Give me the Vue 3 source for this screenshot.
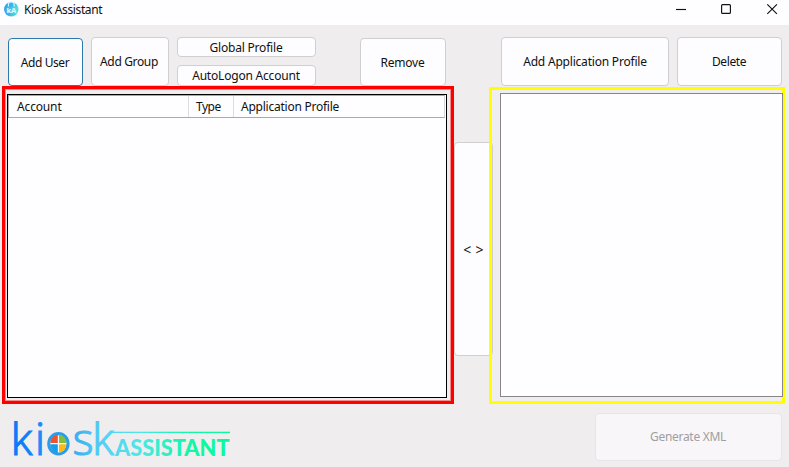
<script setup>
const columns = [
  { name: 'Account', cls: 'account' },
  { name: 'Type', cls: 'type' },
  { name: 'Application Profile', cls: 'profile' },
]
</script>

<template>
  <div class="window">
    <header class="titlebar">
      <svg class="app-icon" width="16" height="18" viewBox="0 0 16 18">
        <defs>
          <linearGradient id="badge" x1="0" y1="0" x2="1" y2="0.3">
            <stop offset="0" stop-color="#2495ea" />
            <stop offset="0.55" stop-color="#35b7ec" />
            <stop offset="1" stop-color="#49e3dc" />
          </linearGradient>
        </defs>
        <circle cx="7.3" cy="9.3" r="7.2" fill="url(#badge)" />
        <path d="M4.4 6.6V4.8a2.9 2.9 0 0 1 5.8 0V6.6" fill="none" stroke="#d5f6fc" stroke-width="1.2" />
        <rect x="1.5" y="6.4" width="11.6" height="7.2" rx="1" fill="#7edcf4" fill-opacity="0.25" />
        <text x="7.3" y="13" class="badge-text" text-anchor="middle">kA</text>
      </svg>
      <span class="title">Kiosk Assistant</span>
      <svg class="controls" width="110" height="20" viewBox="0 0 110 20" fill="none" stroke="#111" stroke-width="1.15">
        <path d="M2 9.5h10" />
        <rect x="47.6" y="4.6" width="8.8" height="8.8" rx="1" />
        <path d="M93.3 4.3l9.6 9.6M102.9 4.3l-9.6 9.6" />
      </svg>
    </header>

    <nav class="toolbar">
      <button class="btn add-user">Add User</button>
      <button class="btn add-group">Add Group</button>
      <div class="stack">
        <button class="btn">Global Profile</button>
        <button class="btn">AutoLogon Account</button>
      </div>
      <button class="btn remove">Remove</button>
      <button class="btn add-profile">Add Application Profile</button>
      <button class="btn delete">Delete</button>
    </nav>

    <main class="content">
      <section class="accounts">
        <div class="table">
          <div class="table-head">
            <div v-for="c in columns" :key="c.name" :class="['cell', c.cls]">{{ c.name }}</div>
          </div>
        </div>
      </section>
      <button class="btn link">&lt; &gt;</button>
      <section class="profiles">
        <div class="list"></div>
      </section>
    </main>

    <footer class="footer">
      <svg class="logo" width="232" height="54" viewBox="0 413 232 54">
        <defs>
          <linearGradient id="brand" gradientUnits="userSpaceOnUse" x1="14" y1="0" x2="230" y2="0">
            <stop offset="0" stop-color="#0a78f4" />
            <stop offset="0.08" stop-color="#0f86fa" />
            <stop offset="0.22" stop-color="#2b9fee" />
            <stop offset="0.42" stop-color="#55d2f6" />
            <stop offset="0.58" stop-color="#50e6e6" />
            <stop offset="0.8" stop-color="#14f6a8" />
            <stop offset="1" stop-color="#08fb96" />
          </linearGradient>
        </defs>
        <g fill="url(#brand)">
          <text class="kiosk" y="455.4"><tspan x="10.8">k</tspan><tspan x="35">i</tspan><tspan x="72.8">s</tspan><tspan x="92.2">k</tspan></text>
          <rect x="112" y="431.7" width="118" height="1.3" />
          <text class="assistant" x="115" y="455.8" textLength="114.5" lengthAdjust="spacingAndGlyphs">ASSISTANT</text>
        </g>
        <ellipse cx="58.4" cy="443.8" rx="9.6" ry="10.2" fill="#fff" stroke="#299cec" stroke-width="3.2" />
        <path d="M57.8 443.1v-8.6a8.2 8.6 0 0 0-7.4 8.6z" fill="#f0532b" />
        <path d="M59 443.1v-8.6a8.2 8.6 0 0 1 7.4 8.6z" fill="#84bf3b" />
        <path d="M57.8 444.3v8.6a8.2 8.6 0 0 1-7.4-8.6z" fill="#159de8" />
        <path d="M59 444.3v8.6a8.2 8.6 0 0 0 7.4-8.6z" fill="#fbba16" />
      </svg>
      <button class="btn generate" disabled>Generate XML</button>
    </footer>
  </div>
</template>

<style>
body {
  margin: 0;
  overflow: hidden;
}
</style>

<style scoped>
.window {
  width: 789px;
  height: 467px;
  display: flex;
  flex-direction: column;
  background: #efedee;
  color: #111;
  font: 12px/16px "Noto Sans", "Open Sans", sans-serif;
  overflow: hidden;
}
.titlebar {
  height: 25px;
  flex: none;
  display: flex;
  align-items: flex-start;
  background: #fefdff;
}
.app-icon {
  margin: 0 0 0 4px;
}
.badge-text {
  font: 700 7.5px "Open Sans", sans-serif;
  fill: #e9fcff;
}
.title {
  margin: 2px 0 0 4px;
  letter-spacing: -0.38px;
}
.controls {
  margin-left: auto;
  margin-right: 5px;
}
.toolbar {
  height: 61px;
  flex: none;
  box-sizing: border-box;
  padding: 12px 7px 0 8px;
  display: flex;
  align-items: stretch;
}
.btn {
  box-sizing: border-box;
  margin: 0;
  padding: 0;
  border: 1px solid #d0ced0;
  border-radius: 4px;
  background: #fdfcfe;
  color: #111;
  font: inherit;
  letter-spacing: -0.2px;
}
.add-user {
  width: 75px;
  margin: 1px 8px 0 0;
  padding: 2px 1px 0 0;
  border-color: #2b78ad;
  letter-spacing: -0.4px;
}
.add-group {
  width: 78px;
  margin-right: 8px;
  padding-right: 2px;
  letter-spacing: -0.35px;
}
.stack {
  width: 139px;
  margin-right: 44px;
  display: grid;
  grid-template-rows: 20px 21px;
  gap: 8px;
}
.stack .btn {
  line-height: 16px;
  padding: 1px 1px 0 0;
}
.remove {
  width: 86px;
  margin: 1px 55px 0 0;
  padding: 2px 1px 0 0;
}
.add-profile {
  width: 168px;
  margin-right: 8px;
}
.delete {
  width: 105px;
  padding-right: 1px;
  letter-spacing: -0.4px;
}
.content {
  height: 318px;
  flex: none;
  display: flex;
  align-items: flex-start;
  padding-left: 2px;
}
.accounts {
  box-sizing: border-box;
  width: 452px;
  height: 318px;
  border: 3px solid #f00;
  box-shadow: inset 0 0 0 1px #f58a8a;
  padding: 5px 3px 3px 2px;
}
.table {
  box-sizing: border-box;
  width: 440px;
  height: 304px;
  border: 1px solid #000;
  background: #fefdff;
}
.table-head {
  box-sizing: border-box;
  width: 437px;
  height: 23px;
  border: 1px solid #aaa8ac;
  border-right-color: #d4d2d6;
  display: flex;
}
.cell {
  box-sizing: border-box;
  border-right: 1px solid #dedce0;
  padding: 3px 0 0 8px;
  letter-spacing: -0.15px;
}
.account {
  width: 180px;
}
.type {
  width: 45px;
  padding-left: 7px;
  letter-spacing: -0.5px;
}
.profile {
  border: 0;
  padding-left: 7px;
  letter-spacing: -0.24px;
}
.link {
  width: 39px;
  height: 214px;
  margin-top: 56px;
  padding-top: 1px;
  font-size: 14px;
  letter-spacing: 0.2px;
}
.profiles {
  position: relative;
  box-sizing: border-box;
  width: 296px;
  height: 317px;
  margin: 1px 0 0 -4px;
  border: 3px solid #ff0;
  padding: 3px 0 0 8px;
}
.list {
  box-sizing: border-box;
  width: 283px;
  height: 304px;
  border: 1px solid #87858a;
  background: #fefdff;
}
.footer {
  flex: 1;
  display: flex;
  justify-content: space-between;
  align-items: flex-start;
  padding: 9px 7px 0 0;
}
.logo {
  flex: none;
  overflow: visible;
}
.kiosk {
  font: 300 44.5px "Open Sans", sans-serif;
  stroke: url(#brand);
  stroke-width: 1.2px;
}
.assistant {
  font: 900 22px Lato, "Liberation Sans", sans-serif;
}
.generate {
  width: 187px;
  height: 48px;
  background: #f8f6f9;
  border-color: #e7e5e8;
  color: #a09ea1;
  padding-right: 1px;
  letter-spacing: -0.3px;
}
</style>
